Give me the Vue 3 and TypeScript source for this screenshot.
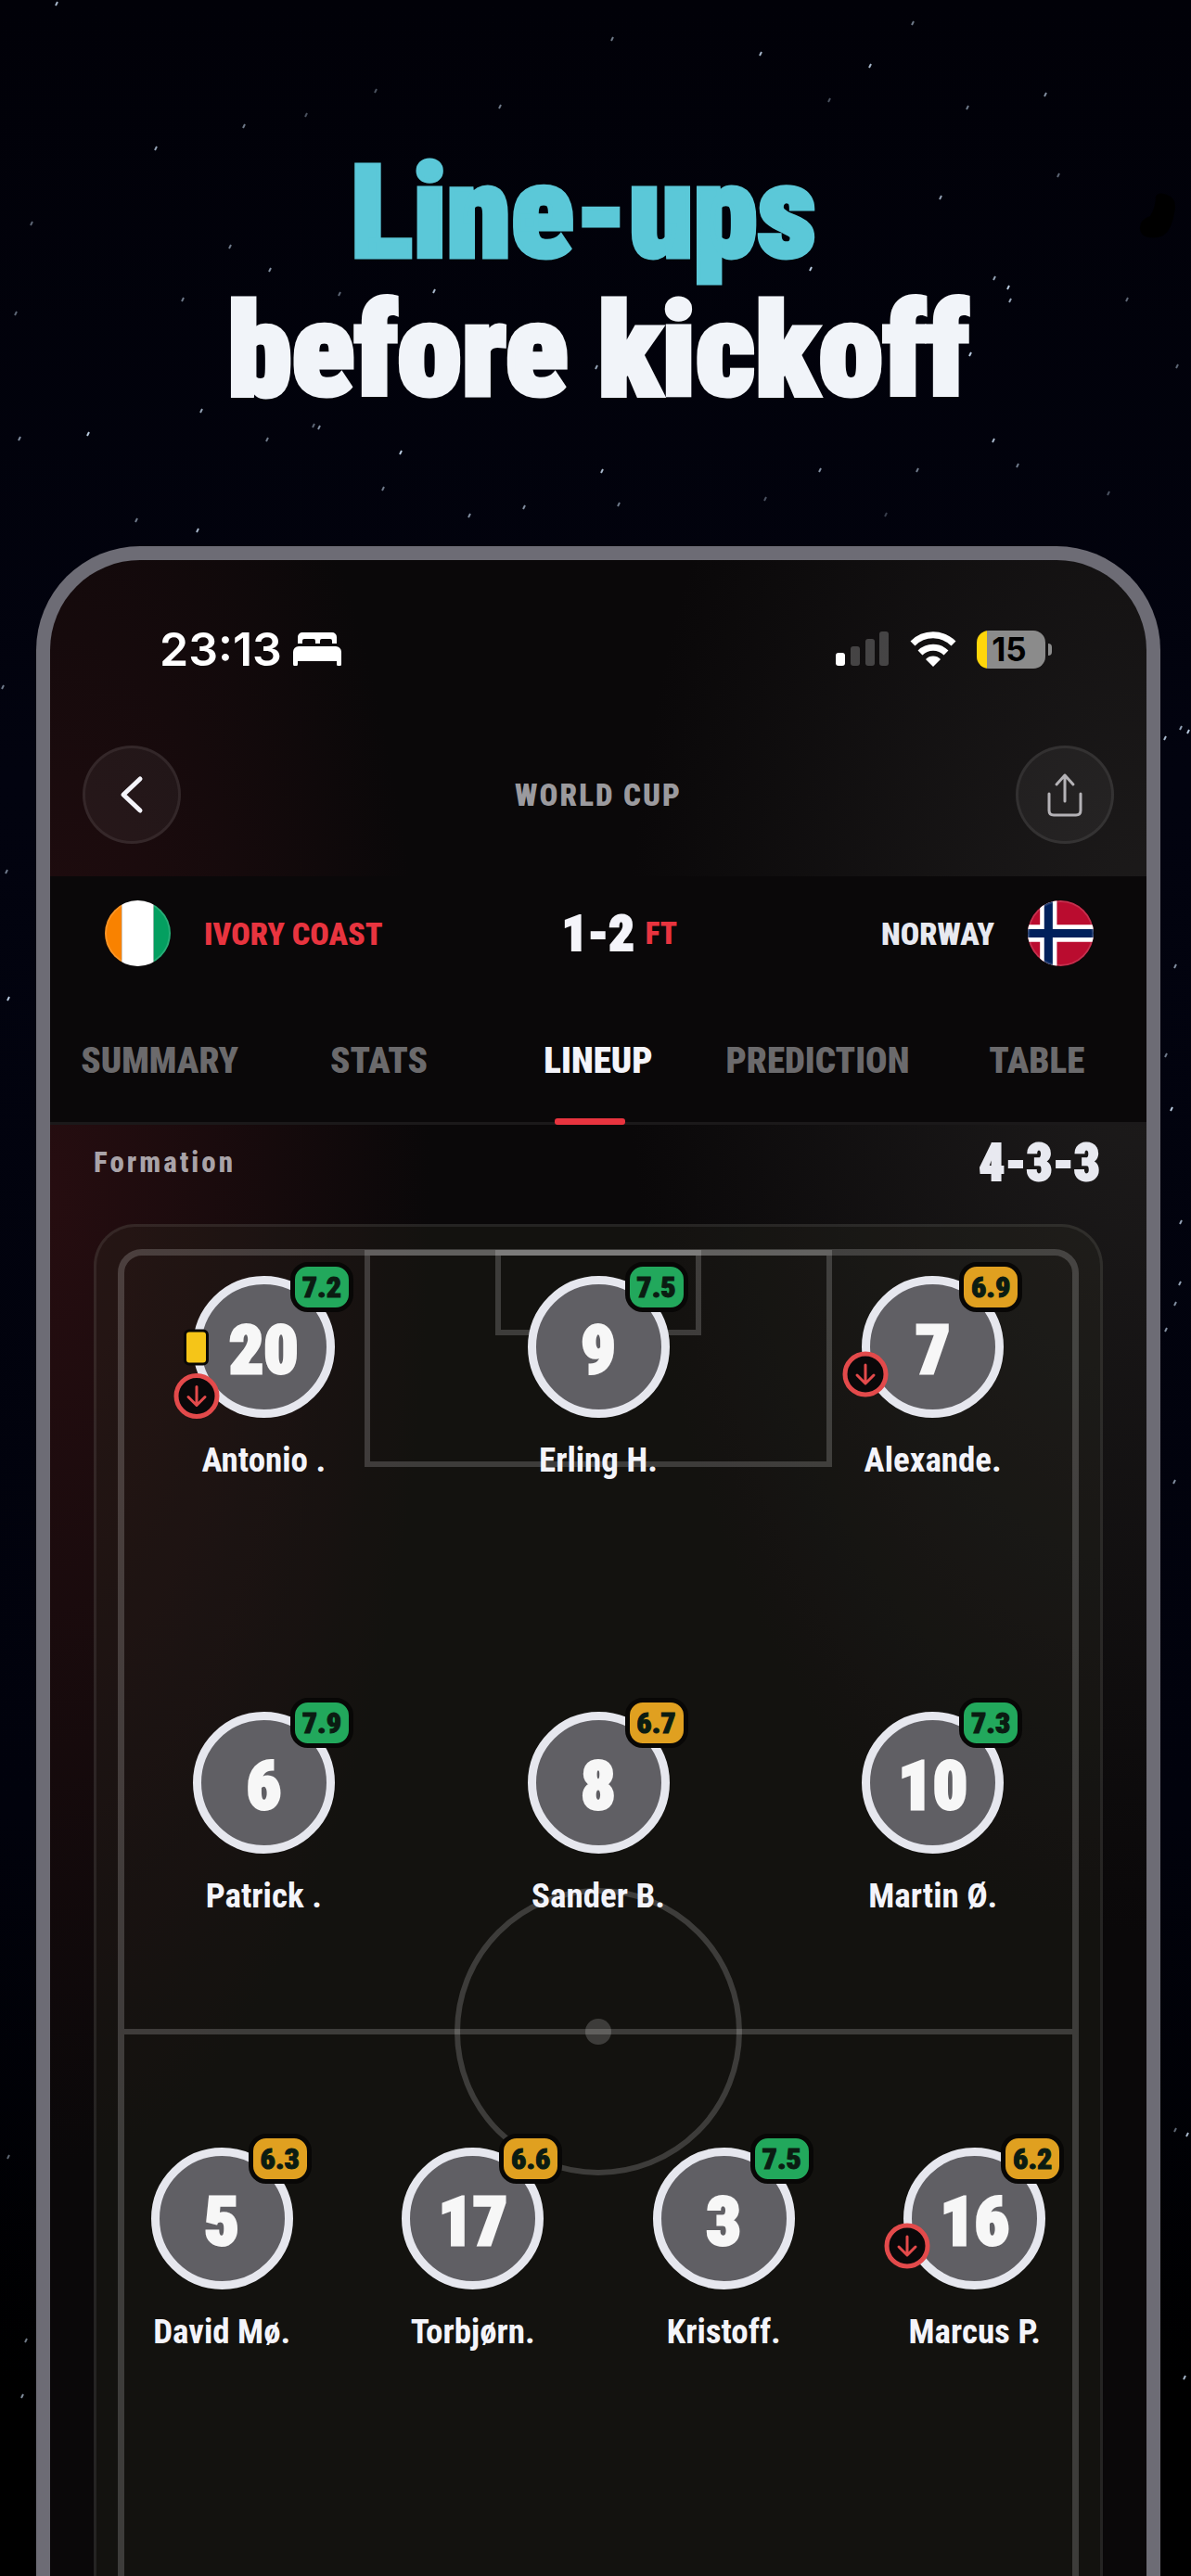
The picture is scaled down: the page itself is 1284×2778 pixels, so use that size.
<script setup lang="ts">
interface Player {
  shirt: number
  name: string
  rating: string
  booked?: boolean
  subbedOff?: boolean
}

// x, y, opacity
type Star = [number, number, number]

const tabs: string[] = ['SUMMARY', 'STATS', 'LINEUP', 'PREDICTION', 'TABLE']
const activeTab = 'LINEUP'

const rows: Player[][] = [
  [
    { shirt: 20, name: 'Antonio .', rating: '7.2', booked: true, subbedOff: true },
    { shirt: 9, name: 'Erling H.', rating: '7.5' },
    { shirt: 7, name: 'Alexande.', rating: '6.9', subbedOff: true },
  ],
  [
    { shirt: 6, name: 'Patrick .', rating: '7.9' },
    { shirt: 8, name: 'Sander B.', rating: '6.7' },
    { shirt: 10, name: 'Martin Ø.', rating: '7.3' },
  ],
  [
    { shirt: 5, name: 'David Mø.', rating: '6.3' },
    { shirt: 17, name: 'Torbjørn.', rating: '6.6' },
    { shirt: 3, name: 'Kristoff.', rating: '7.5' },
    { shirt: 16, name: 'Marcus P.', rating: '6.2', subbedOff: true },
  ],
]

const isGood = (rating: string): boolean => Number(rating) >= 7

const stars: Star[] = [
  [61, 4, 0.9], [660, 42, 0.6], [820, 58, 0.9], [938, 71, 0.9], [984, 25, 0.6], [405, 98, 0.4],
  [539, 115, 0.6], [330, 124, 0.4], [263, 136, 0.6], [168, 160, 0.8], [1127, 102, 0.7], [1043, 116, 0.6],
  [894, 108, 0.4], [1141, 189, 0.5], [1014, 213, 0.8], [34, 241, 0.5], [248, 266, 0.6], [291, 291, 0.7],
  [874, 290, 1], [1072, 300, 0.8], [1087, 310, 1], [1089, 324, 0.8], [1215, 323, 0.5], [1046, 382, 1],
  [1269, 395, 0.5], [197, 323, 0.6], [366, 317, 0.5], [468, 314, 0.9], [17, 338, 0.5], [643, 396, 0.8],
  [217, 443, 0.8], [95, 468, 1], [21, 473, 0.7], [288, 474, 0.6], [338, 459, 0.5], [344, 461, 0.7],
  [432, 488, 1], [413, 527, 0.6], [649, 508, 0.9], [884, 507, 0.7], [989, 507, 0.6], [1071, 475, 0.9],
  [1097, 502, 0.6], [1195, 532, 0.4], [565, 547, 0.7], [667, 544, 0.6], [506, 556, 0.7], [825, 538, 0.4],
  [147, 561, 0.6], [213, 572, 0.9], [955, 555, 0.3], [3, 741, 0.6], [7, 940, 0.6], [9, 1077, 1],
  [9, 2326, 0.5], [28, 2524, 0.6], [24, 2584, 0.7], [1273, 785, 0.8], [1281, 789, 1], [1256, 796, 0.9],
  [1267, 1042, 0.7], [1257, 1138, 0.6], [1263, 1196, 1], [1273, 1318, 0.8], [1272, 1384, 0.8],
  [1267, 1406, 0.7], [1257, 1434, 0.7], [1266, 1598, 0.7], [1267, 2297, 0.5], [1280, 2302, 0.9],
  [1277, 2564, 0.9],
]
</script>

<template>
  <div class="page">
    <svg class="sky" aria-hidden="true">
      <path d="M1246 212q3-6 12-2q12 4 8 20q-4 24-18 26q-18 2-19-9q-1-10 11-14q6-10 6-21z" fill="#000" stroke="none" />
      <line v-for="([x, y, o], i) in stars" :key="i" :x1="x - 1" :y1="y + 2" :x2="x + 1" :y2="y - 2" :opacity="o" />
    </svg>

    <h1 class="headline"><span class="accent">Line-ups&nbsp;</span><br />before kickoff</h1>

    <main class="phone">
      <div class="status">
        <div class="clock">
          <span>23:13</span>
          <svg width="52" height="36" viewBox="0 0 52 36" fill="#fff" aria-hidden="true">
            <path d="M5 12V5a5 5 0 0 1 5-5h32a5 5 0 0 1 5 5v7h-5V9a2 2 0 0 0-2-2h-9a2 2 0 0 0-2 2v3h-5V9a2 2 0 0 0-2-2h-10a2 2 0 0 0-2 2v3z" />
            <path d="M0 21a6 6 0 0 1 6-6h40a6 6 0 0 1 6 6v13a2 2 0 0 1-5 0v-3H5v3a2 2 0 0 1-5 0z" />
          </svg>
        </div>
        <div class="system">
          <svg width="58" height="38" viewBox="0 0 58 38" fill="#fff" aria-hidden="true">
            <rect x="0" y="23" width="10" height="14" rx="3" />
            <g opacity=".22">
              <rect x="16" y="16" width="10" height="21" rx="3" />
              <rect x="32" y="8" width="10" height="29" rx="3" />
              <rect x="47" y="0" width="10" height="37" rx="3" />
            </g>
          </svg>
          <svg width="50" height="38" viewBox="0 0 50 38" aria-hidden="true">
            <g fill="none" stroke="#fff" stroke-width="7">
              <path d="M3 13a31 31 0 0 1 44 0" />
              <path d="M11 23a20 20 0 0 1 28 0" />
            </g>
            <path d="M25 38l-8-8a11 11 0 0 1 16 0z" fill="#fff" />
          </svg>
          <div class="battery"><span>15</span></div>
        </div>
      </div>

      <header class="topbar">
        <button class="round" type="button" aria-label="Back">
          <svg width="30" height="44" viewBox="0 0 30 44" fill="none" stroke="#f4f4fa" stroke-width="5" stroke-linecap="round" stroke-linejoin="round">
            <path d="M24 5L6 22l18 17" />
          </svg>
        </button>
        <p class="league">WORLD CUP</p>
        <button class="round" type="button" aria-label="Share">
          <svg width="40" height="50" viewBox="0 0 40 50" fill="none" stroke="#b4b2b6" stroke-width="3" stroke-linecap="round" stroke-linejoin="round">
            <path d="M20 32V4M11 14l9-10 9 10M3 24v18q0 5 5 5h24q5 0 5-5V24" />
          </svg>
        </button>
      </header>

      <section class="match">
        <div class="score-row">
          <div class="team">
            <svg class="flag" viewBox="0 0 70 70" aria-hidden="true">
              <rect width="18" height="70" fill="#f98200" /><rect x="18" width="34" height="70" fill="#fff" />
              <rect x="52" width="18" height="70" fill="#049f60" />
              <circle cx="35" cy="35" r="34" fill="none" stroke="#fff" stroke-opacity=".15" stroke-width="2" />
            </svg>
            <span class="team-name home">IVORY COAST</span>
          </div>
          <p class="score">1-2<span>FT</span></p>
          <div class="team away">
            <span class="team-name">NORWAY</span>
            <svg class="flag" viewBox="0 0 70 70" aria-hidden="true">
              <rect width="70" height="70" fill="#ba0c2f" />
              <path d="M0 35H70M22 0V70" stroke="#fff" stroke-width="18" />
              <path d="M0 35H70M22 0V70" stroke="#00205b" stroke-width="9" />
              <circle cx="35" cy="35" r="34" fill="none" stroke="#fff" stroke-opacity=".15" stroke-width="2" />
            </svg>
          </div>
        </div>
        <nav class="tabs">
          <a v-for="tab in tabs" :key="tab" href="#" :class="{ active: tab === activeTab }">{{ tab }}</a>
          <i class="indicator"></i>
        </nav>
      </section>

      <section class="formation">
        <h2>Formation</h2>
        <strong>4-3-3</strong>
      </section>

      <section class="pitch">
        <div class="markings" aria-hidden="true">
          <div class="boundary"></div>
          <div class="box penalty"></div>
          <div class="box goal"></div>
          <div class="halfway"></div>
          <div class="circle"></div>
          <div class="spot"></div>
        </div>
        <ul v-for="(row, r) in rows" :key="r" class="row">
          <li v-for="p in row" :key="p.shirt" class="player">
            <div class="disc">
              <span class="shirt">{{ p.shirt }}</span>
              <span class="rating" :class="{ good: isGood(p.rating) }">{{ p.rating }}</span>
              <div class="events">
                <i v-if="p.booked" class="card"></i>
                <svg v-if="p.subbedOff" width="50" height="50" viewBox="0 0 50 50" fill="none" stroke="#e34a4b">
                  <circle cx="25" cy="25" r="22" fill="#0a0809" stroke-width="5" />
                  <path d="M25 15v19M16 26l9 9 9-9" stroke-width="3" stroke-linecap="round" stroke-linejoin="round" />
                </svg>
              </div>
            </div>
            <span class="name">{{ p.name }}</span>
          </li>
        </ul>
        <div class="next-row"><i></i></div>
      </section>
    </main>
  </div>
</template>

<style>
body {
  margin: 0;
  background: #000;
}
</style>

<style scoped>
.page {
  position: relative;
  box-sizing: border-box;
  display: flex;
  flex-direction: column;
  min-height: 100vh;
  padding: 155px 33px 0 39px;
  overflow: hidden;
  color: #f4f4fa;
  font-family: "Roboto Condensed", "Liberation Sans Narrow", Roboto, sans-serif;
  font-weight: 900;
  background: linear-gradient(#010108, #02030f 30%, #01020c 70%, #000 92%);
}

.sky {
  position: absolute;
  inset: 0;
  width: 100%;
  height: 100%;
  stroke: #b9cbe0;
  stroke-width: 2;
}

.headline {
  position: relative;
  margin: 0 0 136px;
  color: #f1f4f9;
  font-size: 140px;
  font-weight: 900;
  line-height: 149px;
  text-align: center;
  -webkit-text-stroke: 5px currentColor;
}

.accent {
  color: #5bc8d8;
}

.phone {
  position: relative;
  flex: 1;
  display: flex;
  flex-direction: column;
  border: 15px solid #6d6c75;
  border-bottom: 0;
  border-radius: 112px 112px 0 0;
  background:
    radial-gradient(ellipse 410px 1050px at 0 680px, #260d10, #0a080900),
    radial-gradient(ellipse 560px 1000px at 100% 480px, #1e1c1c, #0a080900),
    #0a0809;
}

.status {
  display: flex;
  justify-content: space-between;
  align-items: center;
  padding: 66px 109px 0 118px;
  height: 60px;
}

.clock,
.system {
  display: flex;
  align-items: center;
}

.clock {
  gap: 12px;
  color: #fff;
  font: 600 50px/60px Inter, sans-serif;
}

.system {
  gap: 22px;
}

.battery {
  position: relative;
  box-sizing: border-box;
  width: 74px;
  height: 41px;
  padding-right: 4px;
  border-radius: 13px;
  color: #000;
  font: 700 35px/41px Inter, sans-serif;
  text-align: center;
  background: linear-gradient(90deg, #ffd60a 11px, #8b8b8b 11px);
}

.battery::after {
  content: "";
  position: absolute;
  top: 14px;
  right: -7px;
  width: 4px;
  height: 13px;
  border-radius: 0 4px 4px 0;
  background: #8b8b8b;
}

.topbar {
  display: flex;
  justify-content: space-between;
  align-items: center;
  padding: 74px 35px 35px;
}

.round {
  box-sizing: border-box;
  display: grid;
  place-items: center;
  width: 106px;
  height: 106px;
  padding: 0;
  border: 3px solid #ffffff12;
  border-radius: 50%;
  background: #ffffff0d;
}

.league {
  margin: 0;
  color: #9b9a9e;
  font-size: 33px;
  letter-spacing: 2px;
}

.match {
  border-bottom: 3px solid #1b191a;
  background: #0a0809;
}

.score-row {
  display: grid;
  grid-template-columns: 1fr auto 1fr;
  align-items: center;
  padding: 26px 57px 26px 59px;
}

.team {
  display: flex;
  align-items: center;
  gap: 36px;
}

.away {
  justify-content: flex-end;
}

.flag {
  width: 71px;
  height: 71px;
  border-radius: 50%;
}

.team-name {
  color: #e8e9f0;
  font-size: 34px;
}

.home,
.score span {
  color: #e8343f;
}

.score {
  display: flex;
  align-items: center;
  gap: 12px;
  margin: 0;
  padding-left: 44px;
  font-size: 54px;
  line-height: 73px;
  height: 71px;
  -webkit-text-stroke: 2px #f4f4fa;
}

.score span {
  font-size: 33px;
  -webkit-text-stroke: 0;
}

.tabs {
  position: relative;
  display: grid;
  grid-template-columns: repeat(5, 1fr);
}

.tabs a {
  height: 142px;
  color: #6b6a6c;
  font-size: 39px;
  line-height: 152px;
  text-align: center;
  text-decoration: none;
}

.tabs .active {
  color: #f4f4fa;
}

.indicator {
  position: absolute;
  bottom: -3px;
  left: 46%;
  width: 76px;
  height: 7px;
  border-radius: 3px;
  background: #e8343f;
}

.formation {
  box-sizing: border-box;
  display: flex;
  justify-content: space-between;
  align-items: center;
  height: 107px;
  padding: 0 50px 26px 47px;
}

.formation h2 {
  margin: 0;
  color: #a9a3a8;
  font-size: 31px;
  font-weight: 800;
  letter-spacing: 3px;
}

.formation strong {
  color: #e8e9f0;
  font-size: 55px;
  font-weight: 900;
  -webkit-text-stroke: 2px currentColor;
}

.pitch {
  position: relative;
  flex: 1;
  display: flex;
  flex-direction: column;
  gap: 249px;
  margin: 0 47px;
  padding-top: 53px;
  border: 3px solid #ffffff14;
  border-bottom: 0;
  border-radius: 45px 45px 0 0;
  background: #2e302540;
}

.markings,
.markings div {
  position: absolute;
  box-sizing: border-box;
}

.markings {
  inset: 0;
  overflow: hidden;
}

.boundary {
  inset: 24px 23px -40px;
  border: 7px solid #ffffff2e;
  border-radius: 26px;
}

.box {
  top: 25px;
  left: 50%;
  border: 6px solid #ffffff2e;
  transform: translateX(-50%);
}

.penalty {
  width: 504px;
  height: 234px;
}

.goal {
  width: 222px;
  height: 92px;
}

.halfway {
  top: 865px;
  left: 30px;
  right: 30px;
  height: 6px;
  background: #ffffff2e;
}

.circle {
  top: 713px;
  left: 50%;
  width: 310px;
  height: 310px;
  border: 6px solid #ffffff2e;
  border-radius: 50%;
  transform: translateX(-50%);
}

.spot {
  top: 854px;
  left: 50%;
  width: 28px;
  height: 28px;
  border-radius: 50%;
  background: #ffffff2e;
  transform: translateX(-50%);
}

.row {
  position: relative;
  display: flex;
  margin: 0;
  padding: 0;
  list-style: none;
}

.player {
  flex: 1;
  display: flex;
  flex-direction: column;
  align-items: center;
  gap: 23px;
}

.disc {
  position: relative;
  box-sizing: border-box;
  width: 153px;
  height: 153px;
  border: 9px solid #e6e7ee;
  border-radius: 50%;
  color: #f7f7f7;
  font-size: 73px;
  line-height: 143px;
  text-align: center;
  background: #605f64;
}

.shirt {
  -webkit-text-stroke: 3px currentColor;
}

.rating {
  position: absolute;
  top: -24px;
  right: -29px;
  box-sizing: border-box;
  min-width: 68px;
  height: 54px;
  border: 5px solid #080706;
  border-radius: 19px;
  color: #0b1c12;
  font-size: 32px;
  line-height: 45px;
  background: #e0a020;
  -webkit-text-stroke: 1px currentColor;
}

.good {
  background: #22a85c;
}

.events {
  position: absolute;
  top: 97px;
  left: -30px;
  display: flex;
  flex-direction: column;
  align-items: center;
  gap: 8px;
  transform: translateY(-50%);
}

.card {
  box-sizing: border-box;
  width: 27px;
  height: 39px;
  border: 3px solid #080706;
  border-radius: 6px;
  background: #f5c518;
}

.name {
  font-size: 37px;
  font-weight: 700;
  line-height: 45px;
}

.next-row {
  position: relative;
  height: 5px;
  margin: auto 0 0;
  padding-left: 125px;
  overflow: hidden;
  align-self: center;
}

.next-row i {
  display: block;
  width: 48px;
  height: 40px;
  border: 5px solid #080706;
  border-radius: 19px;
}
</style>
